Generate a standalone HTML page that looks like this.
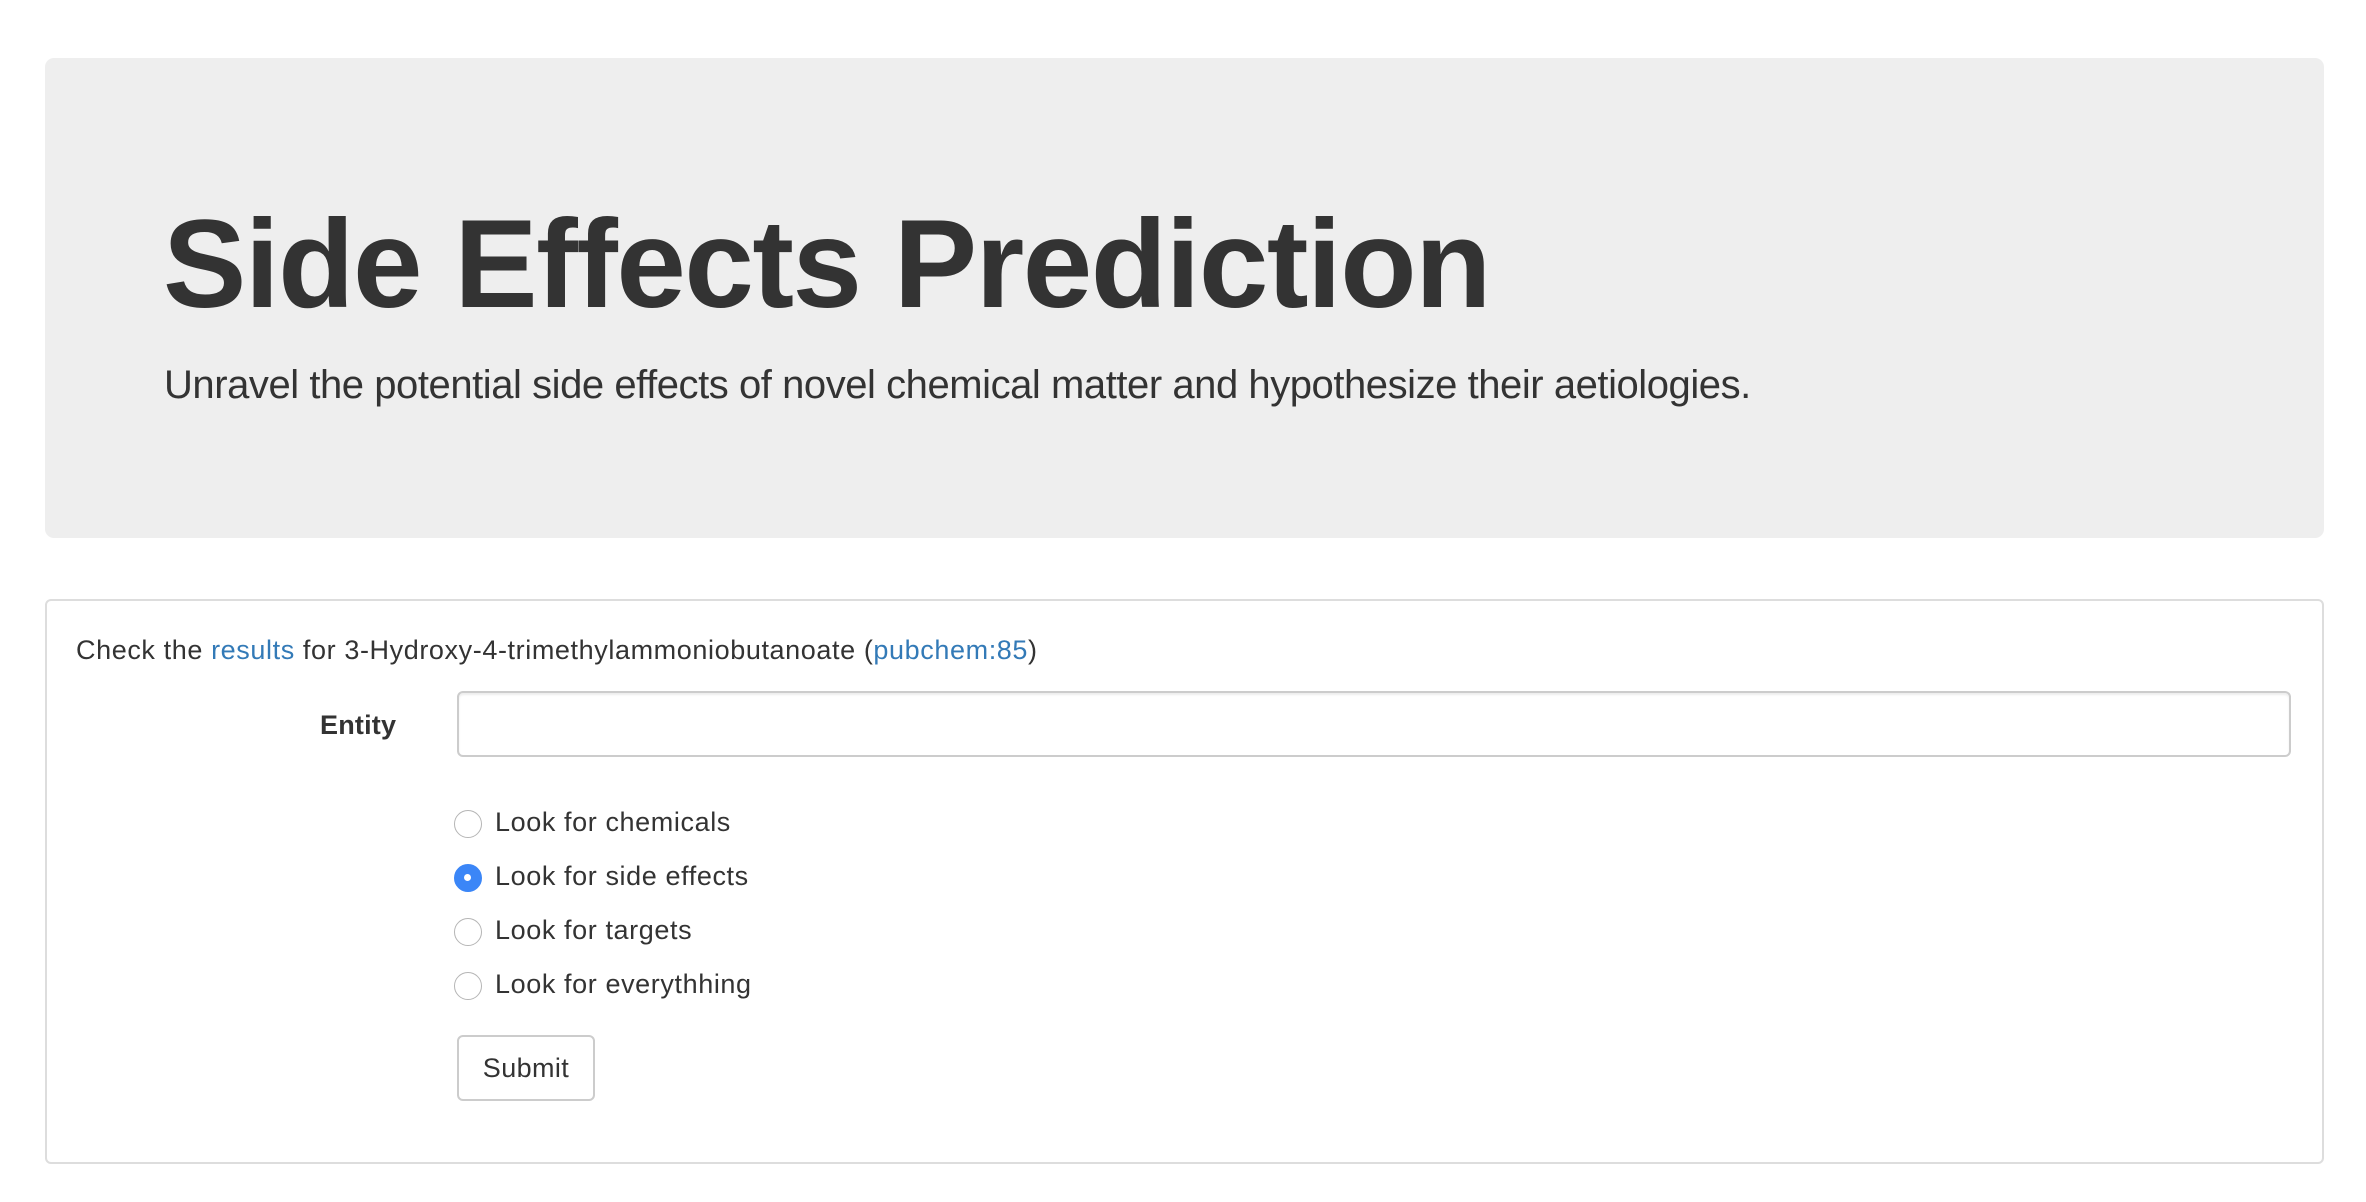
<!DOCTYPE html>
<html><head><meta charset="utf-8"><style>
*{box-sizing:border-box;margin:0;padding:0}
body{width:2366px;height:1202px;background:#fff;font-family:"Liberation Sans",Arial,sans-serif;color:#333;position:relative;overflow:hidden}
.jumbo{position:absolute;left:45px;top:58px;width:2279px;height:480px;background:#eee;border-radius:9px}
h1{position:absolute;left:163px;top:185px;font-size:125px;font-weight:bold;line-height:160px;white-space:nowrap;letter-spacing:-1.5px}
.sub{position:absolute;left:164px;top:360px;font-size:40px;font-weight:300;line-height:50px;white-space:nowrap;letter-spacing:-0.45px}
.panel{position:absolute;left:45px;top:599px;width:2279px;height:565px;border:2px solid #ddd;border-radius:6px}
.t{position:absolute;font-size:27px;line-height:32px;white-space:nowrap;letter-spacing:0.6px}
a{color:#337ab7;text-decoration:none}
.input{position:absolute;left:457px;top:691px;width:1834px;height:66px;border:2px solid #ccc;border-radius:6px;box-shadow:inset 0 2px 2px rgba(0,0,0,.075)}
.r{position:absolute;left:454px;width:28px;height:28px;border-radius:50%;border:1.5px solid #b5b5b5;background:#fff}
.r.on{background:#3b86f7;border-color:#3b86f7}
.r.on:after{content:"";position:absolute;left:9px;top:9px;width:7px;height:7px;border-radius:50%;background:#fff}
.btn{position:absolute;left:457px;top:1035px;width:138px;height:66px;border:2px solid #ccc;border-radius:6px;font-size:27px;line-height:62px;text-align:center;letter-spacing:0.4px}
</style></head><body>
<div class="jumbo"></div>
<h1>Side Effects Prediction</h1>
<div class="sub">Unravel the potential side effects of novel chemical matter and hypothesize their aetiologies.</div>
<div class="panel"></div>
<div class="t" style="left:76px;top:634px">Check the <a>results</a> for 3-Hydroxy-4-trimethylammoniobutanoate (<a>pubchem:85</a>)</div>
<div class="t" style="left:320px;top:709px;font-weight:bold;letter-spacing:0.2px">Entity</div>
<div class="input"></div>
<div class="r" style="top:810px"></div><div class="t" style="left:495px;top:806px">Look for chemicals</div>
<div class="r on" style="top:864px"></div><div class="t" style="left:495px;top:860px">Look for side effects</div>
<div class="r" style="top:918px"></div><div class="t" style="left:495px;top:914px">Look for targets</div>
<div class="r" style="top:972px"></div><div class="t" style="left:495px;top:968px">Look for everythhing</div>
<div class="btn">Submit</div>
</body></html>
